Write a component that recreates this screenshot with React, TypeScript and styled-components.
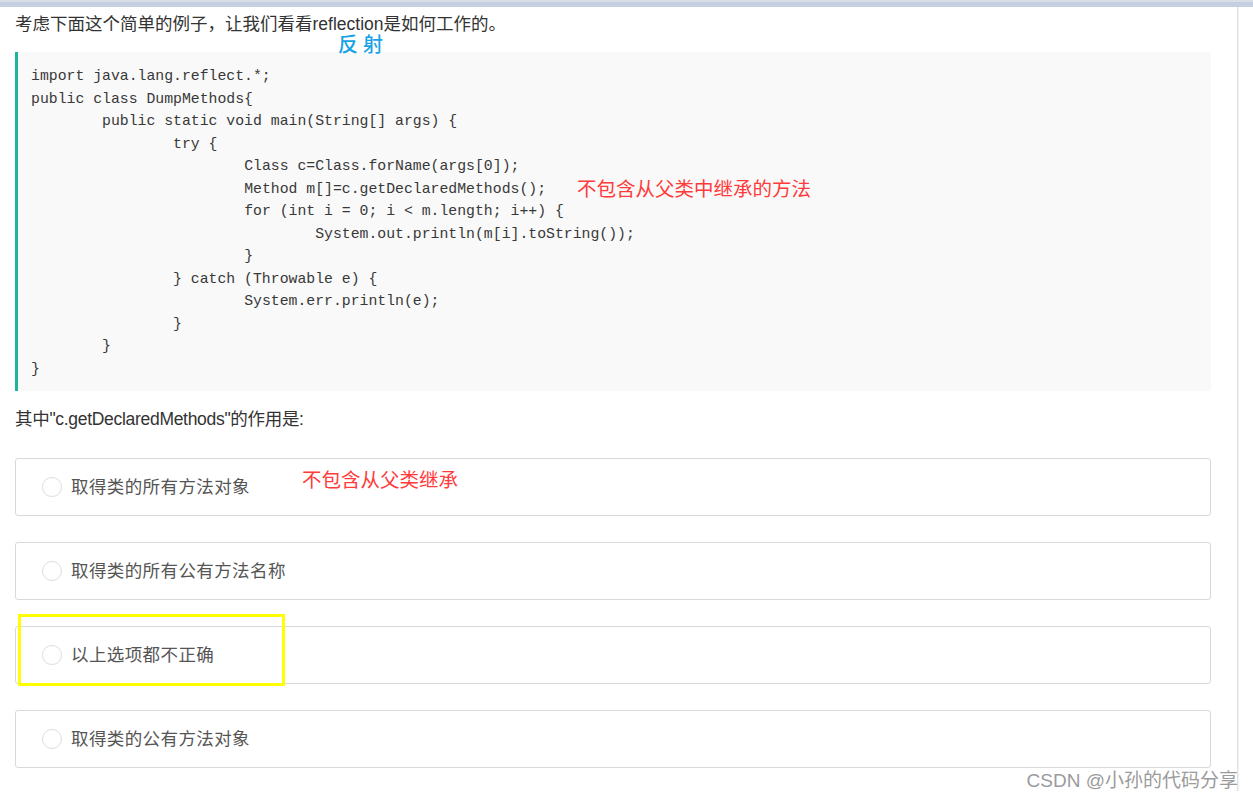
import React, { FunctionComponent } from 'react';
import styled, { createGlobalStyle } from 'styled-components';

const GlobalStyle = createGlobalStyle`
    html, body {
        margin: 0;
        padding: 0;
        background: #ffffff;
    }
    body {
        font-family: "Liberation Sans", "Noto Sans CJK SC", sans-serif;
        color: #333333;
    }
`;

const Page = styled.div`
    position: relative;
    width: 1253px;
    height: 800px;
    overflow: hidden;
    background: #ffffff;
`;

const TopBar = styled.div`
    height: 7px;
    background: #c6cfe0;
    border-top: 2px solid #d9dee7;
    box-sizing: border-box;
`;

const Column = styled.div`
    width: 1238px;
    box-sizing: border-box;
    padding: 5px 26px 23px 15px;
    border-right: 1px solid #e2e2e2;
    box-shadow: 1px 0 0 #f1f1f1;
`;

const Title = styled.p`
    position: relative;
    margin: 0;
    font-size: 17.5px;
    line-height: 24px;
    color: #333333;
`;

// handwritten-style annotation that sits between the title and the code
const BlueNote = styled.span`
    position: absolute;
    left: 323px;
    top: 21px;
    font-size: 20px;
    line-height: 24px;
    letter-spacing: 5px;
    color: #17a2e6;
    font-weight: 500;
    white-space: nowrap;
`;

const RedNote = styled.span`
    font-family: "Liberation Sans", "Noto Sans CJK SC", sans-serif;
    font-size: 19.5px;
    color: #ff3b3b;
    white-space: nowrap;
`;

const CodeNote = styled(RedNote)`
    display: inline-block;
    vertical-align: top;
    height: 22.5px;
    margin-left: 31px;
    line-height: 22.5px;
`;

const OptionNote = styled(RedNote)`
    align-self: flex-start;
    margin: 9px 0 0 43px;
    line-height: 24px;
`;

const CodeBlock = styled.pre`
    margin: 16px 0 0 0;
    padding: 13px 13px 11px 13px;
    background: #f9f9f9;
    border-left: 3px solid #1fb39b;
    font-family: "Liberation Mono", "DejaVu Sans Mono", monospace;
    font-size: 14.8px;
    line-height: 22.5px;
    color: #383838;
    tab-size: 8;
    white-space: pre;
`;

const CodeLine = styled.div`
    height: 22.5px;
`;

const Question = styled.p`
    margin: 16px 0 0 0;
    font-size: 17.5px;
    line-height: 24px;
    color: #333333;
    letter-spacing: -0.3px;
`;

const OptionList = styled.div`
    display: flex;
    flex-direction: column;
    gap: 26px;
    margin-top: 27px;
`;

const OptionCard = styled.div`
    position: relative;
    display: flex;
    align-items: center;
    gap: 9px;
    height: 58px;
    box-sizing: border-box;
    padding: 0 0 3px 26px;
    border: 1px solid #d9d9d9;
    border-radius: 3px;
    background: #ffffff;
`;

const Radio = styled.span`
    width: 20px;
    height: 20px;
    margin-top: 3px;
    box-sizing: border-box;
    border: 1px solid #dcdcdc;
    border-radius: 50%;
    background: #ffffff;
`;

const OptionText = styled.span`
    font-size: 17.5px;
    color: #555555;
    letter-spacing: 0.4px;
`;

// yellow marker drawn over the third answer
const Highlight = styled.div`
    position: absolute;
    left: 2px;
    top: -13px;
    width: 267px;
    height: 72px;
    box-sizing: border-box;
    border: 3px solid #ffff00;
`;

const Watermark = styled.div`
    position: absolute;
    right: 15px;
    top: 769px;
    font-size: 19px;
    line-height: 24px;
    color: #9b9b9b;
    text-shadow: 0 0 2px #ffffff;
    white-space: nowrap;
`;

const code = [
    'import java.lang.reflect.*;',
    'public class DumpMethods{',
    '\tpublic static void main(String[] args) {',
    '\t\ttry {',
    '\t\t\tClass c=Class.forName(args[0]);',
    '\t\t\tMethod m[]=c.getDeclaredMethods();',
    '\t\t\tfor (int i = 0; i < m.length; i++) {',
    '\t\t\t\tSystem.out.println(m[i].toString());',
    '\t\t\t}',
    '\t\t} catch (Throwable e) {',
    '\t\t\tSystem.err.println(e);',
    '\t\t}',
    '\t}',
    '}',
];

const options = [
    '取得类的所有方法对象',
    '取得类的所有公有方法名称',
    '以上选项都不正确',
    '取得类的公有方法对象',
];

const App: FunctionComponent = () => {
    return (
        <Page>
            <GlobalStyle />
            <TopBar />
            <Column>
                <Title>
                    考虑下面这个简单的例子，让我们看看reflection是如何工作的。
                    <BlueNote>反射</BlueNote>
                </Title>
                <CodeBlock>
                    {code.map((line, i) => (
                        <CodeLine key={i}>
                            {line}
                            {i === 5 && <CodeNote>不包含从父类中继承的方法</CodeNote>}
                        </CodeLine>
                    ))}
                </CodeBlock>
                <Question>其中"c.getDeclaredMethods"的作用是:</Question>
                <OptionList>
                    {options.map((text, i) => (
                        <OptionCard key={text}>
                            <Radio />
                            <OptionText>{text}</OptionText>
                            {i === 0 && <OptionNote>不包含从父类继承</OptionNote>}
                            {i === 2 && <Highlight />}
                        </OptionCard>
                    ))}
                </OptionList>
            </Column>
            <Watermark>CSDN @小孙的代码分享</Watermark>
        </Page>
    );
};

export default App;
